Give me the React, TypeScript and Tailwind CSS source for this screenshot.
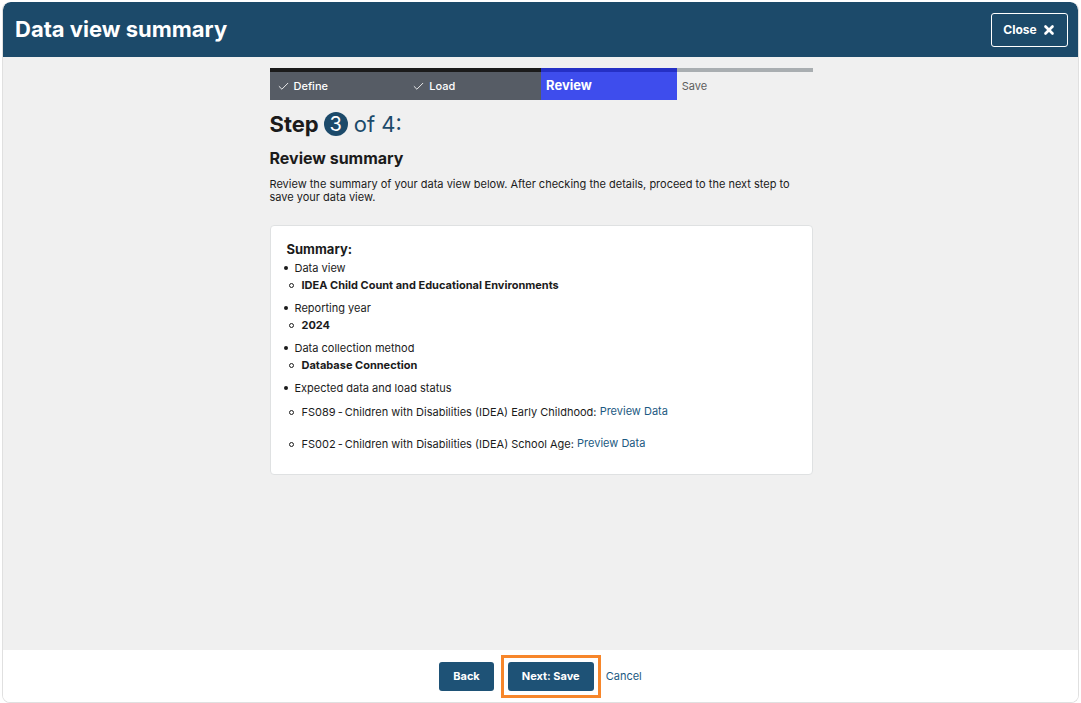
import { Check, X } from "lucide-react";

const steps = [
  { label: "Define", state: "done" },
  { label: "Load", state: "done" },
  { label: "Review", state: "current" },
  { label: "Save", state: "todo" },
];

const font = { fontFamily: "Inter, 'Liberation Sans', sans-serif" };

function StepBar() {
  return (
    <div className="grid grid-cols-4 w-full">
      {steps.map((s) => (
        <div key={s.label} className="flex flex-col">
          <div
            className={
              s.state === "done"
                ? "h-[4px] bg-[#1b1b1b]"
                : s.state === "current"
                ? "h-[4px] bg-[#2530c5]"
                : "h-[4px] bg-[#a9aeb1]"
            }
          />
          <div
            className={
              s.state === "done"
                ? "h-[28px] flex items-center gap-1 pl-[7px] bg-[#565c65] text-white text-[11px] font-medium"
                : s.state === "current"
                ? "h-[28px] flex items-center pl-[5px] bg-[#3e4ded] text-white text-[13px] font-bold"
                : "h-[28px] flex items-center pl-[5px] text-[#5d5d5d] text-[11px]"
            }
          >
            {s.state === "done" && <Check size={13} strokeWidth={1.6} />}
            <span>{s.label}</span>
          </div>
        </div>
      ))}
    </div>
  );
}

function Sub({ children }: { children: React.ReactNode }) {
  return (
    <li className="flex items-center gap-[8px] pl-[5px]">
      <span className="w-[5px] h-[5px] rounded-full border border-[#1b1b1b]" />
      {children}
    </li>
  );
}

function Item({ label, children }: { label: string; children: React.ReactNode }) {
  return (
    <li>
      <div className="flex items-center gap-[7px]">
        <span className="w-[4px] h-[4px] rounded-full bg-[#1b1b1b]" />
        <span>{label}</span>
      </div>
      <ul className="mt-[3px] flex flex-col">{children}</ul>
    </li>
  );
}

export default function App() {
  return (
    <div className="w-[1081px] h-[703px] bg-white p-[2px] pb-0" style={font}>
      <div className="h-full flex flex-col rounded-t-lg rounded-b-lg overflow-hidden border border-[#e0e0e0] border-t-0">
        <header className="h-[55px] shrink-0 bg-[#1c4a6a] flex items-center justify-between pl-[12px] pr-[10px] rounded-t-lg">
          <h1 className="text-white text-[22px] font-bold">Data view summary</h1>
          <button className="h-[34px] w-[77px] border border-white rounded-[3px] flex items-center justify-center gap-[5px] text-white text-[12px] font-bold">
            Close
            <X size={14} strokeWidth={4.5} />
          </button>
        </header>

        <main className="flex-1 bg-[#f0f0f0] flex justify-center pt-[11px] pl-[1px]">
          <div className="w-[543px] text-[#1b1b1b]">
            <StepBar />

            <div className="mt-[10px] flex items-center text-[22px] leading-[28px]">
              <span className="font-bold">Step</span>
              <span className="ml-[5px] w-[24px] h-[24px] rounded-full bg-[#1c4a6a] text-white flex items-center justify-center text-[20px]">
                3
              </span>
              <span className="ml-[6px] text-[#1c4a6a]">of 4:</span>
            </div>

            <h2 className="mt-[10px] text-[16px] font-bold leading-[20px]">Review summary</h2>
            <p className="mt-[10px] text-[11px] leading-[13px] text-[#1b1b1b]">
              Review the summary of your data view below. After checking the details, proceed to the next step to save your
              data view.
            </p>

            <section className="mt-[21px] bg-white border border-[#dfe1e2] rounded-[4px] pt-[15px] pb-[23px] pl-[13px] pr-4 text-[11px] leading-[14px]">
              <h3 className="pl-[3px] text-[13px] font-bold leading-[16px]">Summary:</h3>
              <ul className="mt-[4px] flex flex-col gap-[9px]">
                <Item label="Data view">
                  <Sub>
                    <span className="font-bold">IDEA Child Count and Educational Environments</span>
                  </Sub>
                </Item>
                <Item label="Reporting year">
                  <Sub>
                    <span className="font-bold">2024</span>
                  </Sub>
                </Item>
                <Item label="Data collection method">
                  <Sub>
                    <span className="font-bold">Database Connection</span>
                  </Sub>
                </Item>
                <Item label="Expected data and load status">
                  <div className="mt-[7px] flex flex-col gap-[18px]">
                    <Sub>
                      <span>
                        FS089<span className="mx-[2px]">-</span>Children with Disabilities (IDEA) Early Childhood:{" "}
                        <a className="text-[#1c5a82] relative -top-[1px]">Preview Data</a>
                      </span>
                    </Sub>
                    <Sub>
                      <span>
                        FS002<span className="mx-[2px]">-</span>Children with Disabilities (IDEA) School Age:{" "}
                        <a className="text-[#1c5a82] relative -top-[1px]">Preview Data</a>
                      </span>
                    </Sub>
                  </div>
                </Item>
              </ul>
            </section>
          </div>
        </main>

        <footer className="h-[52px] shrink-0 bg-white flex items-center justify-center gap-[4px]">
          <button className="h-[29px] px-[14px] rounded-[3px] bg-[#1e5276] text-white text-[11px] font-bold">Back</button>
          <div className="ml-[3px] border-[3px] border-[#f7862a] p-[4px]">
            <button className="h-[29px] px-[14px] rounded-[3px] bg-[#1e5276] text-white text-[11px] font-bold block">
              Next: Save
            </button>
          </div>
          <a className="ml-[1px] text-[11px] text-[#1c5a82]">Cancel</a>
        </footer>
      </div>
    </div>
  );
}
